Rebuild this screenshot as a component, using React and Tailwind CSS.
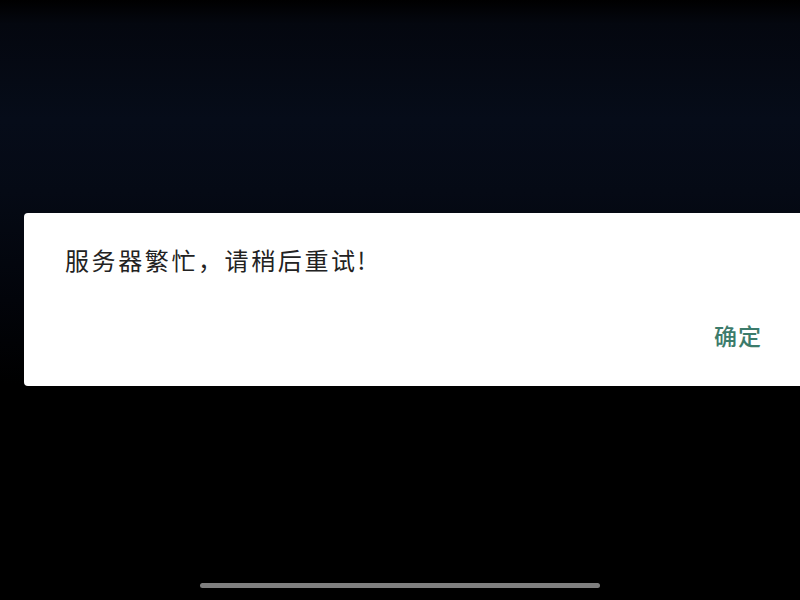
export default function App() {
  return (
    <div
      className="w-[800px] h-[600px] overflow-hidden flex flex-col bg-[linear-gradient(to_bottom,#000000_0%,#04070f_4%,#060c19_20%,#050a15_32%,#02040a_50%,#000000_64%,#000000_100%)]"
      style={{ fontFamily: '"Noto Sans CJK SC", "Noto Sans", sans-serif' }}
    >
      {/* backdrop */}
      <div className="h-[213px] shrink-0" />

      {/* Alert dialog */}
      <div className="ml-[24px] h-[173px] shrink-0 bg-white rounded-l-[4px] flex flex-col pl-[41px] pr-[38px] pt-[35px]">
        <p className="text-[24px] leading-[24px] tracking-[2.6px] text-[#222222]">
          服务器繁忙，请稍后重试!
        </p>
        <div className="flex-1 flex justify-end pt-[52px]">
          <button className="h-fit text-[23px] leading-[23px] tracking-[1px] font-medium text-[#3c7b6b] cursor-pointer">
            确定
          </button>
        </div>
      </div>

      {/* Home indicator */}
      <div className="flex-1 flex flex-col justify-end items-center pb-[12px]">
        <div className="w-[400px] h-[5px] rounded-full bg-[#7f7f7f]" />
      </div>
    </div>
  );
}
